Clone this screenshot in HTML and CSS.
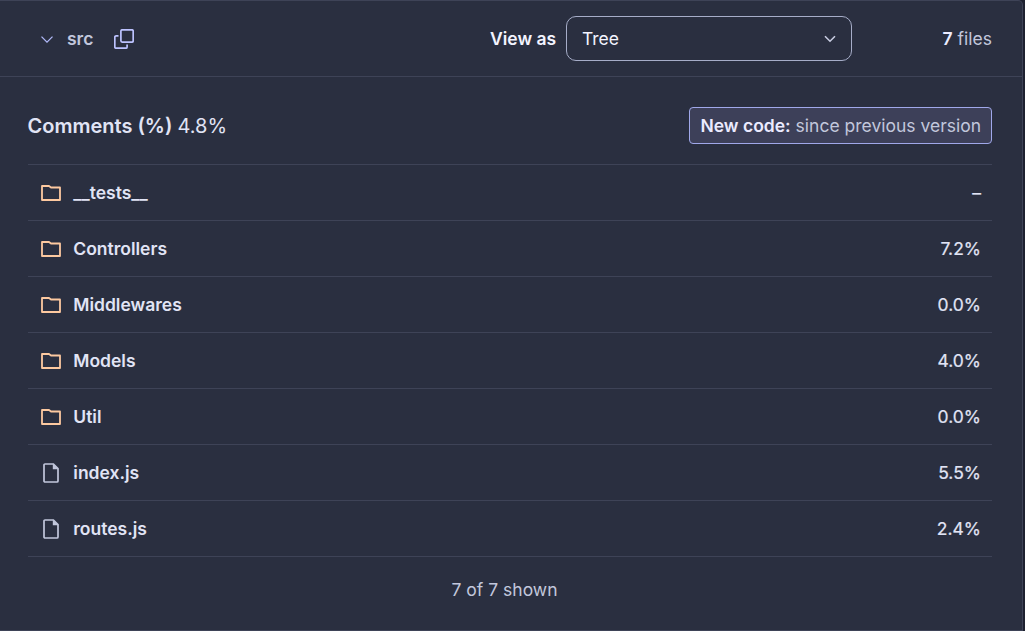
FILE: index.html
```html
<!DOCTYPE html>
<html lang="en">
<head>
<meta charset="utf-8">
<title>Comments measure</title>
<link rel="stylesheet" href="styles.css">
</head>
<body>
<svg class="defs" aria-hidden="true">
  <symbol id="folder" viewBox="0 0 20 16"><path d="M1 1h7l2 1.500h9v12.500H1z" fill="none" stroke="currentColor" stroke-width="1.800" stroke-linejoin="round"/></symbol>
  <symbol id="file" viewBox="0 0 16 20"><path d="M2 1h8.400l4.600 4.600V18a1 1 0 0 1-1 1H2a1 1 0 0 1-1-1V2a1 1 0 0 1 1-1z" fill="none" stroke="currentColor" stroke-width="1.700"/><path d="M9.800 1v5.200H15z" fill="currentColor"/></symbol>
</svg>
<main class="card">
  <header class="toolbar">
    <div class="crumb">
      <svg class="crumb-arrow" viewBox="0 0 12 7"><path d="M.5.6 6 6.100 11.500.6"/></svg>
      <span class="crumb-name">src</span>
      <svg class="copy" viewBox="0 0 20 20"><rect x="6.900" y=".8" width="12.300" height="12.300" rx="1.300"/><path d="M4.500 6.900H2.100A1.300 1.300 0 0 0 .8 8.200v9.700a1.300 1.300 0 0 0 1.300 1.300h9.700a1.300 1.300 0 0 0 1.300-1.300v-2.400"/></svg>
    </div>
    <div class="view">
      <span class="view-label">View as</span>
      <div class="select"><span>Tree</span><svg class="select-arrow" viewBox="0 0 12 8"><path d="m1 1.200 5 5 5-5"/></svg></div>
    </div>
    <div class="count"><b>7</b> files</div>
  </header>
  <section class="body">
    <div class="summary">
      <div class="metric"><b>Comments (%)</b> <span>4.8%</span></div>
      <div class="badge"><b>New code:</b> since previous version</div>
    </div>
    <ul class="list">
      <li class="row"><svg class="folder"><use href="#folder"/></svg><span class="name">__tests__</span><span class="value">–</span></li>
      <li class="row"><svg class="folder"><use href="#folder"/></svg><span class="name">Controllers</span><span class="value">7.2%</span></li>
      <li class="row"><svg class="folder"><use href="#folder"/></svg><span class="name">Middlewares</span><span class="value">0.0%</span></li>
      <li class="row"><svg class="folder"><use href="#folder"/></svg><span class="name">Models</span><span class="value">4.0%</span></li>
      <li class="row"><svg class="folder"><use href="#folder"/></svg><span class="name">Util</span><span class="value">0.0%</span></li>
      <li class="row"><svg class="file"><use href="#file"/></svg><span class="name">index.js</span><span class="value">5.5%</span></li>
      <li class="row"><svg class="file"><use href="#file"/></svg><span class="name">routes.js</span><span class="value">2.4%</span></li>
    </ul>
    <div class="shown">7 of 7 shown</div>
  </section>
</main>
</body>
</html>
```
FILE: styles.css
```css
* { box-sizing: border-box; }
body {
  margin: 0;
  height: 631px;
  overflow: hidden;
  background: #1e2130;
  color: #c2c7dc;
  font: 400 17.5px/25px Inter, "Liberation Sans", sans-serif;
}
b { font-weight: 600; color: #ebebff; }
svg { display: block; flex: none; }
.defs { display: none; }
.card {
  width: 1023px;
  height: 631px;
  background: #2a2f40;
  border: 1px solid #3e4357;
  border-left: 0;
  border-radius: 0 5px 0 0;
}
.toolbar {
  display: flex;
  align-items: center;
  height: 76px;
  padding-right: 30px;
  border-bottom: 1px solid #3e4357;
}
.crumb { display: flex; align-items: center; width: 490px; padding-left: 41px; }
.crumb-arrow { width: 12px; height: 7px; margin-top: 2px; fill: none; stroke: #b1b9f8; stroke-width: 1.3; }
.crumb-name { width: 27px; margin-left: 14px; font-weight: 600; }
.copy { width: 20px; height: 20px; margin-left: 20px; fill: none; stroke: #bdc3ff; stroke-width: 1.7; }
.view { display: flex; align-items: center; width: 362px; }
.view-label { width: 76px; color: #f3f4ff; font-weight: 600; }
.select {
  display: flex;
  align-items: center;
  justify-content: space-between;
  width: 286px;
  height: 45px;
  padding: 0 15px;
  border: 1px solid #a6adc8;
  border-radius: 10px;
  color: #f3f4ff;
}
.select-arrow { width: 12px; height: 8px; fill: none; stroke: #c9cde2; stroke-width: 1.6; }
.count { margin-left: auto; }
.body { padding: 30px 30px 0 28px; }
.summary { display: flex; align-items: center; justify-content: space-between; height: 37px; }
.metric { padding-top: 2px; margin-left: -.5px; font-size: 20px; color: #e1e4f5; }
.metric b { color: #e1e4f5; }
.metric span { margin-left: -.5px; }
.badge {
  width: 303px;
  height: 37px;
  padding: 5px 0 0 10.5px;
  border: 1px solid #a0a8ea;
  border-radius: 4px;
  background: #3d4059;
  white-space: nowrap;
}
.list { margin: 20px 0 0; padding: 0; list-style: none; border-top: 1px solid #3e4357; }
.row { display: flex; align-items: center; height: 56px; padding: 0 11px 0 13px; border-bottom: 1px solid #3e4357; color: #e1e4f5; }
.folder { width: 20px; height: 16px; color: #fdc9a0; }
.file { width: 16px; height: 20px; margin: 0 2.5px 0 1.5px; color: #c2c7dc; }
.name { margin-left: 12.3px; font-weight: 600; }
.value { margin-left: auto; -webkit-text-stroke: .2px currentColor; }
.shown { padding: 20px 11px 0 0; text-align: center; }
```
